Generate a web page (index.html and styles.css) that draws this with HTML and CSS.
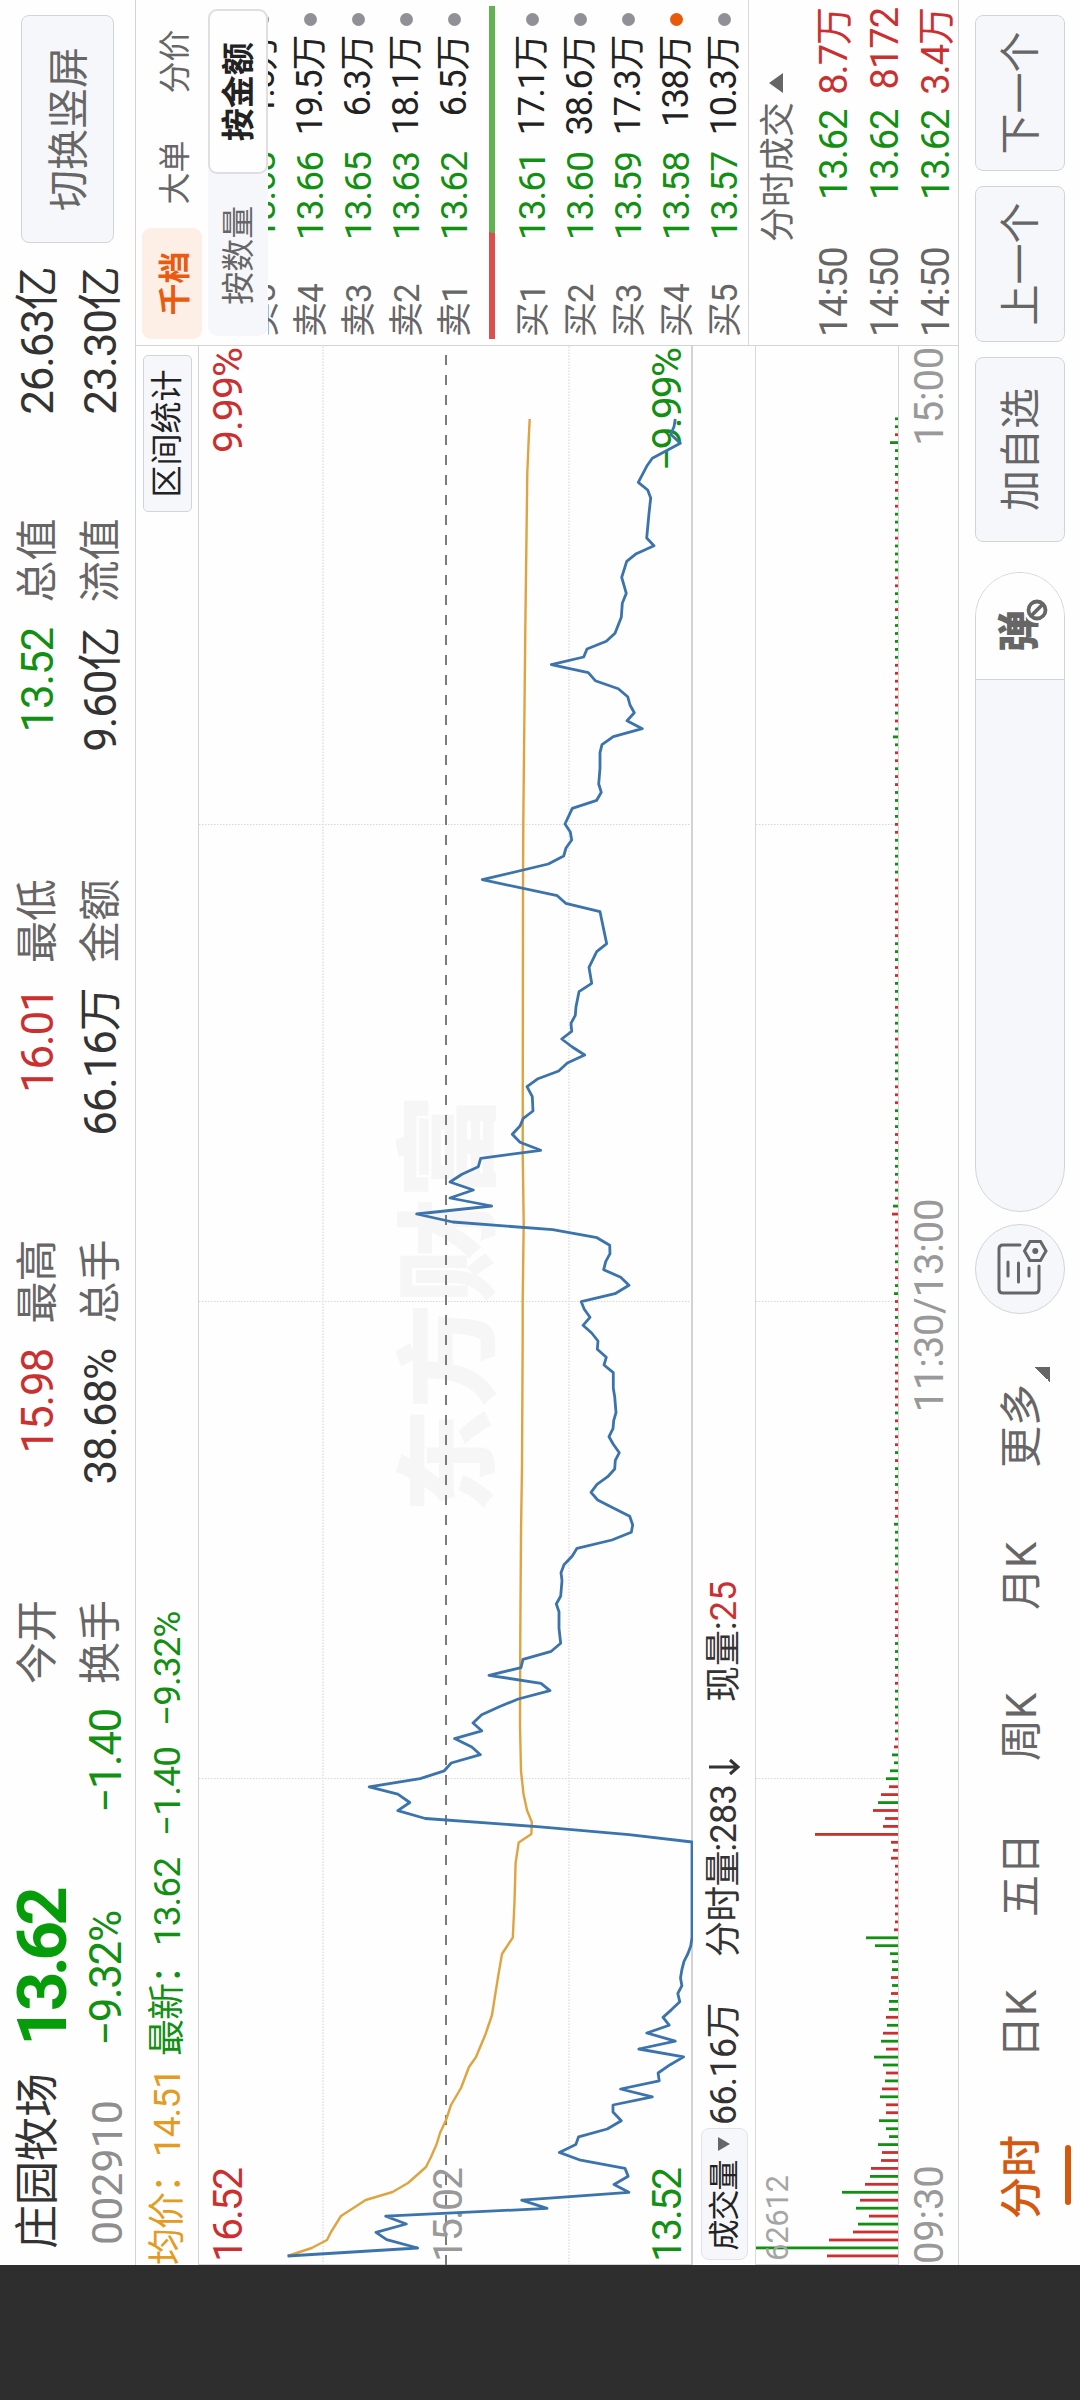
FILE: index.html
```html
<!DOCTYPE html>
<html lang="zh-CN">
<head>
    <meta charset="UTF-8">
    <meta name="viewport" content="width=device-width, initial-scale=1.0">
    <title>庄园牧场 002910</title>
    <link rel="stylesheet" href="styles.css">
</head>
<body>
    <div class="screen">
        <div class="landscape">
            <div class="notch"></div>
            <div class="app">
                <header class="header">
                    <div class="stock">
                        <div class="stock-row">
                            <h1 class="name">庄园牧场</h1>
                            <span class="price">13.62</span>
                        </div>
                        <div class="stock-row second">
                            <span class="code">002910</span>
                            <span class="percent">−9.32%</span>
                            <span class="change">−1.40</span>
                        </div>
                    </div>
                    <div class="stats">
                        <div class="stat"><span class="label">今开</span><span class="red">15.98</span></div>
                        <div class="stat"><span class="label">最高</span><span class="red">16.01</span></div>
                        <div class="stat"><span class="label">最低</span><span class="green">13.52</span></div>
                        <div class="stat"><span class="label">总值</span><span>26.63亿</span></div>
                        <div class="stat"><span class="label">换手</span><span>38.68%</span></div>
                        <div class="stat"><span class="label">总手</span><span>66.16万</span></div>
                        <div class="stat"><span class="label">金额</span><span>9.60亿</span></div>
                        <div class="stat"><span class="label">流值</span><span>23.30亿</span></div>
                    </div>
                    <button class="btn switch">切换竖屏</button>
                </header>

                <main class="main">
                    <section class="charts">
                        <div class="info">
                            <span class="info-avg">均价：</span>
                            <span class="info-avg num">14.51</span>
                            <span class="info-last">最新：</span>
                            <span class="info-last num">13.62</span>
                            <span class="info-last diff">−1.40</span>
                            <span class="info-last">−9.32%</span>
                            <button class="btn range">区间统计</button>
                        </div>

                        <svg class="price-chart" viewBox="0 199 1919 494">
                            <text class="watermark" x="752" y="486" textLength="419" lengthAdjust="spacingAndGlyphs">东方财富</text>
                            <g class="grid">
                                <path d="M0 323H1919M0 569H1919M486.5 199V691M963.5 199V691M1440.5 199V691" />
                            </g>
                            <path class="frame" d="M0.5 199V692" />
                            <path class="base" d="M0 446H1919" />
                            <path class="bottom" d="M0 692H1919" />
                            <text class="axis red" x="3" y="241.5" textLength="95">16.52</text>
                            <text class="axis gray" x="3" y="461.5" textLength="95">15.02</text>
                            <text class="axis green" x="3" y="681" textLength="95">13.52</text>
                            <text class="axis red" x="1812" y="241.5" textLength="106">9.99%</text>
                            <text class="axis green" x="1794" y="681" textLength="124">−9.99%</text>
                            <polyline class="avg-line" points="9,287.6 17,311.7 25,327 33,331 49,341 65,365.7 73,392.6 82,408 98,426 108,431 121,436.7 132,440 145,446 160,451 177,461 198,469 208,476 231,485.6 250,492 269,495 292,498.7 311,502 327.5,512.8 363,514.5 402,515.6 422.6,518.7 431,531.4 443,531.8 454.7,527 471,523.5 494,521 540,520 632,520.3 732,521 798,522 932,522.7 965,522.7 1042,523.7 1112,522.7 1378,523 1442,523.3 1635,525.3 1792,527.3 1828,528.8 1846,529.7" />
                            <polyline class="price-line" points="9,287.6 17,417.7 25.4,386.7 32.7,376 41,406.3 48.8,385.7 56.6,547 64.9,521.7 72.7,628.9 80.5,614 88.8,628.2 96.6,625 104.8,580.6 112.6,559.3 120.4,575.8 128.2,578.6 136,607.2 144.3,621.3 153,613 160,613 168.2,652.3 176,620.6 184.2,659.2 192,658.1 200.3,670.2 208.1,683.6 216,638.8 223.8,675.3 232,646.8 239.8,669.2 247.6,663 255.4,671.6 263.2,679.8 271.5,677.8 279.3,681.9 287.1,680.5 295.4,681.9 303.7,684 311.5,688 319.3,690.8 327.5,692 423,692 430.4,628.9 438.2,540 446.5,425.3 454.3,397.8 462.5,409.8 470.8,397.8 478.2,369.2 486.4,420.2 494.2,444.3 502,451.2 510.3,480.4 518,471.8 526.4,454.6 534.2,481.8 542,473 550.3,481.7 558.3,499.3 566,518.3 574.3,550 581.7,541 589.7,489 597.3,521 605.7,523 613.7,551.3 621.7,560.7 636.7,559 653.3,559 661,556.3 669,560.7 684.3,562 692.3,561 700.3,564 709,572.3 716.7,577 725,612 732.7,631.3 740,632.7 748.7,629.7 757,613.3 765,597.7 772.7,591 780.7,597 788.3,607.7 796,614.7 804.7,615.3 812.3,619.3 820.7,613.3 828.3,609 836.3,613 844.3,613.7 852.3,616 868.3,614.7 876.7,613.3 892.3,613.3 900,604 907.7,606.3 915.7,597.3 924,598 932,591.7 939.7,583 947.7,590 955.7,584.3 963.3,581.2 971.3,615 979.7,629 987.7,620.7 995.3,603.7 1003.3,605.7 1011.3,610 1019.7,609.7 1027.3,597 1035.3,552.7 1043,452.7 1051,416.7 1059,491.7 1067,450 1075,473.3 1083,450 1090.7,462 1098.3,478.3 1106.7,480.7 1114.7,540.7 1122.7,520 1130.7,512.3 1139,520 1146.7,523.3 1154,533 1168.3,532.3 1178.3,527 1186.3,538 1194,558.7 1202,567.3 1210,584.7 1218,572.3 1226,561.7 1233.7,571.7 1241.7,571 1249.7,575.3 1258.3,576 1273.3,579 1281.7,591.7 1297.7,589 1313.3,596.7 1321.3,606.7 1353.3,600 1361.7,565.7 1369.3,557.3 1385.3,482.3 1401,548.3 1409,563.7 1417,566 1425,571.7 1433,570.3 1441,565 1456.7,572.3 1464.7,596.7 1472.7,601.3 1481,598.7 1496.7,600 1512.3,600 1520.3,602 1528.3,613.3 1536.3,642.3 1544.3,627 1552.3,634.3 1560,630 1568.3,627.7 1576.3,618.3 1584.3,595.3 1592.3,588.3 1600.3,551.3 1608,583.7 1616,587 1623.7,606.3 1631.7,615 1647.7,621.3 1661.7,622.3 1671.7,626.3 1687.7,621.7 1703.7,626.7 1711.3,636.3 1719.3,654 1727,646.7 1751.7,649 1767,650.7 1775,647.7 1782.7,638.3 1798.7,646.7 1806.7,652.3 1821.7,680.3 1830.7,670.7 1838.3,674 1846,675.3" />
                        </svg>

                        <div class="volume-info">
                            <button class="btn picker">成交量<i class="caret-down"></i></button>
                            <span class="vol-total">66.16万</span>
                            <span class="vol-minute">分时量:283<svg class="arrow" viewBox="0 0 20 34"><path d="M10 2V31M3 23l7 8 7-8" /></svg></span>
                            <span class="vol-now">现量:<b class="red">25</b></span>
                        </div>

                        <svg class="volume-chart" viewBox="0 756 1919 143">
                            <path class="grid" d="M486.5 756V898M963.5 756V898M1440.5 756V898" />
                            <path class="frame" d="M0.5 756V898M0 898.5H1919" />
                            <g id="bars"></g>
                            <text class="axis small" x="4" y="788" textLength="86">62612</text>
                        </svg>

                        <div class="times">
                            <span>09:30</span>
                            <span>11:30/13:00</span>
                            <span>15:00</span>
                        </div>
                    </section>

                    <aside class="panel">
                        <nav class="panel-tabs">
                            <a class="active">千档</a>
                            <a>大单</a>
                            <a>分价</a>
                        </nav>
                        <div class="toggle">
                            <span>按数量</span>
                            <span class="on">按金额</span>
                        </div>
                        <div class="book">
                            <ul class="orders sells">
                                <li><span>卖5</span><em>13.68</em><b>1.5万</b><i></i></li>
                                <li><span>卖4</span><em>13.66</em><b>19.5万</b><i></i></li>
                                <li><span>卖3</span><em>13.65</em><b>6.3万</b><i></i></li>
                                <li><span>卖2</span><em>13.63</em><b>18.1万</b><i></i></li>
                                <li><span>卖1</span><em>13.62</em><b>6.5万</b><i></i></li>
                            </ul>
                            <div class="ratio"></div>
                            <ul class="orders">
                                <li><span>买1</span><em>13.61</em><b>17.1万</b><i></i></li>
                                <li><span>买2</span><em>13.60</em><b>38.6万</b><i></i></li>
                                <li><span>买3</span><em>13.59</em><b>17.3万</b><i></i></li>
                                <li><span>买4</span><em>13.58</em><b>138万</b><i class="hot"></i></li>
                                <li><span>买5</span><em>13.57</em><b>10.3万</b><i></i></li>
                            </ul>
                        </div>
                        <div class="deals">
                            <h2>分时成交<i class="caret-up"></i></h2>
                            <ul>
                                <li><span>14:50</span><em>13.62</em><b>8.7万</b></li>
                                <li><span>14:50</span><em>13.62</em><b>8172</b></li>
                                <li><span>14:50</span><em>13.62</em><b>3.4万</b></li>
                            </ul>
                        </div>
                    </aside>
                </main>

                <footer class="footer">
                    <nav class="periods">
                        <a class="active">分时</a>
                        <a>日K</a>
                        <a>五日</a>
                        <a>周K</a>
                        <a>月K</a>
                        <a class="more">更多<i class="corner"></i></a>
                    </nav>
                    <button class="btn settings">
                        <svg viewBox="-30 -30 60 60">
                            <path d="M24 0V-17Q24-21 20-21H-20Q-24-21-24-17V15Q-24 19-20 19H3" />
                            <path d="M-7-12H7M-13-1.5H6M-7 9H1" />
                            <path d="M18 4.5L27.5 10V20.5L18 26L8.500 20.500V10Z" />
                            <circle cx="18" cy="15.300" r="3" />
                        </svg>
                    </button>
                    <div class="danmu">
                        <div class="danmu-switch">
                            <span class="danmu-text">弹</span>
                            <svg class="ban" viewBox="0 0 26 26"><circle class="halo" cx="13" cy="13" r="13" /><circle cx="13" cy="13" r="8.500" /><path d="M7.500 7.500L18.500 18.500" /></svg>
                        </div>
                    </div>
                    <button class="btn add">加自选</button>
                    <button class="btn step">上一个</button>
                    <button class="btn step">下一个</button>
                </footer>
            </div>
        </div>
    </div>
    <script src="volume.js"></script>
</body>
</html>
```
FILE: styles.css
```css
* {
    margin: 0;
    padding: 0;
    box-sizing: border-box;
}

body {
    background: #fefefe;
    font-family: Roboto, 'Noto Sans CJK SC', sans-serif;
    color: #333;
}

.screen {
    width: 1080px;
    height: 2400px;
    overflow: hidden;
}

/* phone is held sideways */
.landscape {
    display: flex;
    width: 2400px;
    height: 1080px;
    transform-origin: 0 0;
    transform: rotate(-90deg) translateX(-2400px);
}

.notch {
    width: 135px;
    background: #2e2e2e;
}

.app {
    display: flex;
    flex-direction: column;
    width: 2265px;
    background: #fefefe;
}

.red {
    color: #cb3030;
    fill: #cb3030;
}

.green {
    color: #129012;
    fill: #129012;
}

.gray {
    fill: #999;
}

ul {
    list-style: none;
}

em, b, i {
    font-style: normal;
    font-weight: 400;
}

.btn {
    display: flex;
    align-items: center;
    justify-content: center;
    background: #f6f7fa;
    border: 1px solid #d2d5d8;
    border-radius: 8px;
    font-family: inherit;
    font-size: 41px;
    line-height: 1;
    color: #666;
}

/* header */
.header {
    display: flex;
    height: 136px;
    border-bottom: 1px solid #d2d5d8;
}

.stock {
    width: 581px;
    padding: 0 0 0 16px;
}

.stock-row {
    display: flex;
    align-items: center;
    height: 76px;
}

.stock-row.second {
    height: 60px;
    font-size: 44px;
    color: #129012;
}

.name {
    width: 203px;
    font-size: 44px;
    font-weight: 400;
    line-height: 1;
}

.price {
    padding-top: 8px;
    font-size: 69px;
    font-weight: 700;
    line-height: 1;
    letter-spacing: -4.6px;
    color: #079c0a;
}

.code {
    width: 203px;
    padding: 2px 0 0 4px;
    font-size: 43px;
    color: #8e8e8e;
}

.percent,
.change {
    letter-spacing: -1.4px;
}

.percent {
    width: 233px;
}

.stats {
    display: grid;
    grid-template-columns: repeat(4, 335px);
    grid-template-rows: 63px 63px;
    column-gap: 25.5px;
    width: 1417px;
    padding-top: 6px;
}

.stat {
    display: flex;
    align-items: center;
    justify-content: space-between;
    font-size: 44px;
    line-height: 1;
    letter-spacing: -1.2px;
}

.label {
    font-size: 42px;
    letter-spacing: 0;
    color: #666;
}

.switch {
    width: 228px;
    height: 93px;
    margin: 21px 0 0 24px;
    padding-top: 3px;
}

/* charts */
.main {
    display: flex;
    height: 823px;
    border-bottom: 1px solid #d2d5d8;
}

.charts {
    width: 1919px;
}

.info {
    display: flex;
    align-items: center;
    height: 63px;
    border-bottom: 1px solid #d2d5d8;
    font-size: 37px;
    line-height: 1;
    letter-spacing: -1px;
    white-space: nowrap;
}

.info-avg {
    width: 108px;
    color: #e39b22;
}

.info-avg.num {
    width: 101px;
}

.info-last {
    width: 110px;
    color: #129012;
}

.info-last.diff {
    letter-spacing: -0.8px;
}

.range {
    width: 157px;
    height: 49px;
    margin-left: auto;
    margin-right: 9px;
    border-radius: 5px;
    font-size: 32px;
    color: #222;
}

.price-chart {
    display: block;
    width: 1919px;
    height: 494px;
}

.watermark {
    font-size: 103px;
    font-weight: 900;
    fill: #f6f6f6;
}

.grid {
    stroke: #d8d8d8;
    stroke-width: 1.2;
    stroke-dasharray: 1.5 1.5;
    fill: none;
}

.frame {
    stroke: #d5d5d5;
    stroke-width: 1;
}

.base {
    stroke: #7b7b7b;
    stroke-width: 2;
    stroke-dasharray: 10 10;
}

.bottom {
    stroke: #d3d3d3;
    stroke-width: 2;
}

.avg-line,
.price-line {
    fill: none;
    stroke: #3b73ad;
    stroke-width: 2.8;
    stroke-linejoin: round;
}

.avg-line {
    stroke: #dfa440;
    stroke-width: 2.4;
}

.axis {
    font-size: 41px;
}

.axis.small {
    font-size: 31px;
    fill: #a5a5a5;
}

.volume-info {
    display: flex;
    align-items: center;
    height: 63px;
    padding-left: 5px;
    border-bottom: 1px solid #d8d8d8;
    font-size: 36px;
    line-height: 1;
    letter-spacing: -0.8px;
}

.picker {
    width: 132px;
    height: 47px;
    border-color: #e2e3e6;
    font-size: 31px;
    letter-spacing: -1px;
    color: #222;
}

.caret-down {
    margin-left: 9px;
    border: 7px solid transparent;
    border-top: 12px solid #666;
    border-bottom: 0;
}

.vol-total {
    width: 171px;
    padding-left: 3px;
}

.vol-minute {
    display: flex;
    align-items: center;
    width: 255px;
}

.vol-now {
    letter-spacing: 0;
}

.arrow {
    width: 20px;
    height: 34px;
    margin-left: 8px;
    fill: none;
    stroke: #333;
    stroke-width: 3;
}

.volume-chart {
    display: block;
    width: 1919px;
    height: 143px;
}

.times {
    display: flex;
    align-items: center;
    justify-content: space-between;
    height: 59px;
    padding: 3px 1px 0;
    font-size: 40px;
    line-height: 1;
    letter-spacing: -0.2px;
    color: #999;
}

/* order book */
.panel {
    width: 346px;
    border-left: 1px solid #d2d5d8;
}

.panel-tabs {
    display: flex;
    height: 60px;
    margin: 6px 6px 6px;
    font-size: 32px;
    color: #666;
}

.panel-tabs a {
    display: flex;
    flex: 1;
    align-items: center;
    justify-content: center;
}

.panel-tabs .active {
    border-radius: 9px;
    background: #fdeee6;
    font-weight: 700;
    color: #ea5a10;
}

.toggle {
    display: flex;
    height: 60px;
    margin: 0 9px;
    border-radius: 9px;
    background: #f6f7fa;
    font-size: 33px;
    line-height: 1;
    color: #666;
}

.toggle span {
    display: flex;
    flex: 1;
    align-items: center;
    justify-content: center;
    border-radius: 9px;
}

.toggle .on {
    border: 2px solid #dfdfdf;
    background: #fefefe;
    font-weight: 700;
    color: #222;
}

.book {
    display: flex;
    flex-direction: column;
    justify-content: flex-end;
    height: 481px;
    overflow: hidden;
    border-bottom: 1px solid #d8d8d8;
}

.orders li {
    display: flex;
    align-items: center;
    height: 48px;
    padding: 0 13px 0 8px;
    font-size: 37px;
    line-height: 1;
    letter-spacing: -1px;
}

.orders span {
    width: 97px;
    padding-top: 2px;
    font-size: 35px;
    color: #666;
}

.orders em,
.deals em {
    width: 87px;
    color: #129012;
}

.orders b {
    width: 117px;
    font-size: 36px;
    letter-spacing: -1.4px;
    text-align: right;
    color: #222;
}

.orders i {
    width: 13px;
    height: 13px;
    margin-left: auto;
    border-radius: 50%;
    background: #909096;
}

.orders .hot {
    background: #e65a0a;
}

.ratio {
    height: 6px;
    margin: 11px 6px 13px;
    background: linear-gradient(100deg, #d9504e 32%, #62b350 32%);
    flex-shrink: 0;
}

.deals h2 {
    display: flex;
    align-items: center;
    height: 59px;
    padding-left: 103px;
    font-size: 35px;
    font-weight: 400;
    line-height: 1;
    color: #666;
}

.caret-up {
    margin: 0 0 6px 9px;
    border: 10px solid transparent;
    border-bottom: 14px solid #666;
    border-top: 0;
}

.deals li {
    display: flex;
    align-items: center;
    height: 51px;
    padding: 0 8px;
    font-size: 38px;
    line-height: 1;
    letter-spacing: -1px;
}

.deals span {
    width: 137px;
    color: #666;
}

.deals b {
    margin-left: auto;
    color: #cb3030;
}

/* bottom bar */
.footer {
    display: flex;
    height: 121px;
    padding: 16px 15px 0 46px;
}

.footer .btn {
    padding-top: 3px;
}

.periods {
    display: flex;
    width: 905px;
    height: 105px;
    font-size: 42px;
    line-height: 93px;
    color: #666;
}

.periods a {
    width: 151px;
}

.periods a:nth-child(1) {
    width: 161px;
}

.periods a:nth-child(2) {
    width: 141px;
}

.periods a:nth-child(3) {
    width: 156px;
}

.periods .active {
    font-weight: 500;
    color: #d4590f;
}

.periods .active::after {
    content: '';
    display: block;
    width: 60px;
    height: 6px;
    margin: -3px 0 0 14px;
    border-radius: 3px;
    background: #d4590f;
}

.periods a:nth-child(5) {
    width: 142px;
}

.periods .more {
    display: flex;
    width: 110px;
}

.corner {
    width: 15px;
    height: 15px;
    margin: 60px 0 0 2px;
    background: linear-gradient(135deg, transparent 50%, #666 50%);
}

.footer .settings {
    width: 90px;
    height: 90px;
    padding: 0;
    border-radius: 50%;
}

.settings svg {
    width: 60px;
    height: 60px;
    fill: none;
    stroke: #666;
    stroke-width: 3;
    stroke-linecap: round;
}

.settings circle {
    fill: #666;
    stroke: none;
}

.danmu {
    display: flex;
    justify-content: flex-end;
    width: 640px;
    height: 90px;
    margin: 0 30px 0 12px;
    border: 1px solid #d2d5d8;
    border-radius: 45px;
    background: #f6f7fa;
    overflow: hidden;
}

.danmu-switch {
    display: flex;
    width: 107px;
    padding-left: 27px;
    border-left: 1px solid #d2d5d8;
    background: #fefefe;
}

.danmu-text {
    font-size: 42px;
    font-weight: 900;
    line-height: 87px;
    color: #666;
}

.ban {
    width: 26px;
    height: 26px;
    margin: 48px 0 0 -13px;
    fill: none;
    stroke: #666;
    stroke-width: 3.8;
}

.ban .halo {
    fill: #fefefe;
    stroke: none;
}

.add {
    width: 185px;
    height: 90px;
}

.step {
    width: 156px;
    height: 90px;
    margin-left: 15px;
}
```
FILE: volume.js
```js
// one bar per minute from 09:30, positive = red, negative = green
const volumes = [
    71, -142, 69, 45, -40, 29, -42, 38, -56, 33, -28, 27, 17, 16, -20, -9, -12, -19, 12, 12,
    -18, 16, -13, 12, -15, -24, 12, -17, 15, -11, 12, -9, -9, 7, -6, 7, -6, -6, -8, -23,
    -32, 4, 3, 3, 3, 3, 3, 3, 3, 3, 7, 5, 7, 83, 15, 13, 25, -20, 17, 9,
    -12, -8, -4, -6, 4
];

// quiet minutes, only the direction matters
const quiet =
    'rgrggggrrggggrrrrrrrgrg' +
    'gggggrrrrgggrgrrgrgrrrrrrgrgrrgrrggrrggrrrrrg' +
    'rgrggggrrgggrrrggggrrgggrgggrrgggrrrrrrrrggggg' +
    'rrggggrrgrrgggrgrrrrrrggggggrggrrggggr' +
    'gggrgrrgggggrgg';

for (const c of quiet) {
    volumes.push(c === 'r' ? 3 : -3);
}
volumes[92] = -4;
volumes[121] = -4;
volumes[131] = 6;
volumes[132] = -5;
volumes[191] = -5;
volumes[228] = -8;

const bars = document.getElementById('bars');
volumes.slice(0, 232).forEach((v, i) => {
    const bar = document.createElementNS('http://www.w3.org/2000/svg', 'rect');
    bar.setAttribute('x', (7.7 + i * 7.953).toFixed(1));
    bar.setAttribute('y', 898 - Math.abs(v));
    bar.setAttribute('width', 2.8);
    bar.setAttribute('height', Math.abs(v));
    bar.setAttribute('class', v > 0 ? 'red' : 'green');
    bars.appendChild(bar);
});
```
